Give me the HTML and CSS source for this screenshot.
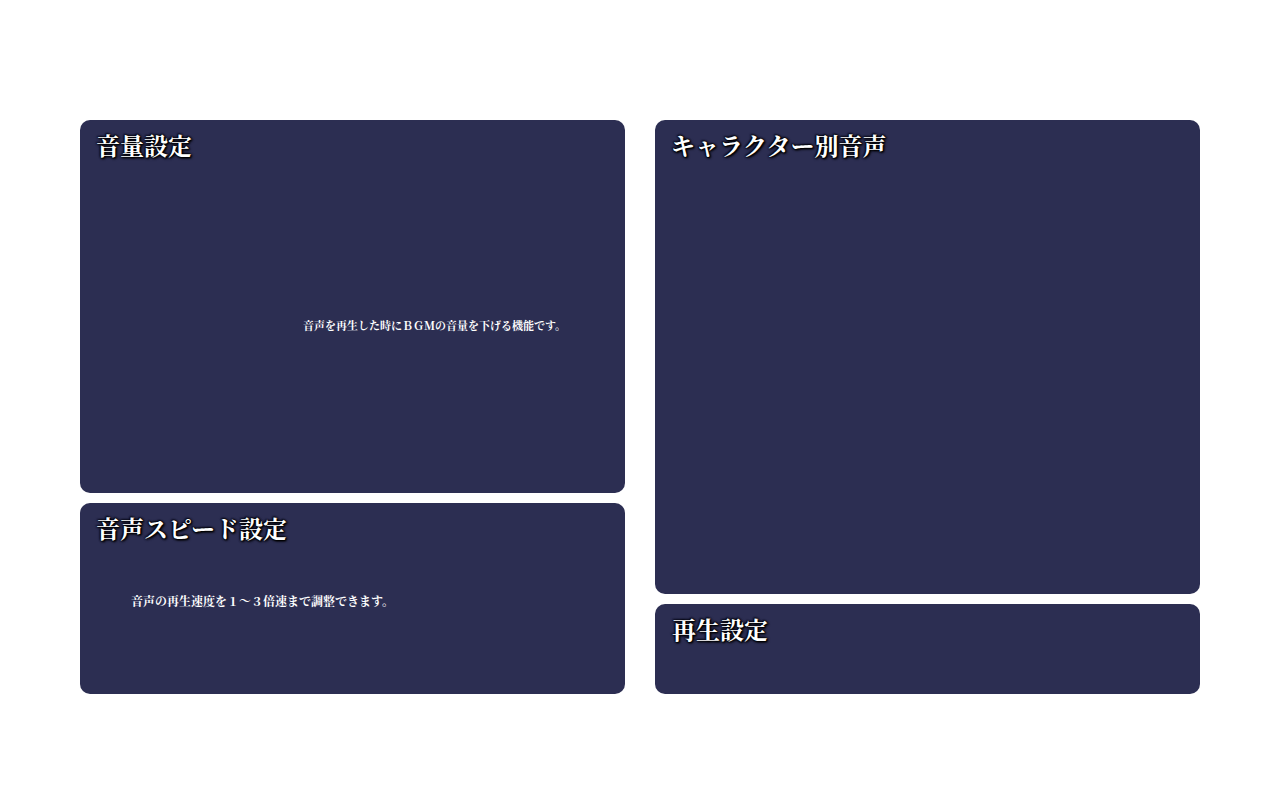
FILE: index.html
```html
<!DOCTYPE html>
<html lang="ja">
<head>
<meta charset="utf-8">
<link rel="stylesheet" href="styles.css">
</head>
<body>
<div class="settings">
  <div class="col">
    <section class="panel volume">
      <h2 class="title">音量設定</h2>
      <div class="body body-volume">
        <p class="desc">音声を再生した時にＢＧＭの音量を下げる機能です。</p>
      </div>
    </section>
    <section class="panel speed">
      <h2 class="title">音声スピード設定</h2>
      <div class="body body-speed">
        <p class="desc desc-lg">音声の再生速度を１～３倍速まで調整できます。</p>
      </div>
    </section>
  </div>
  <div class="col">
    <section class="panel chara">
      <h2 class="title">キャラクター別音声</h2>
    </section>
    <section class="panel play">
      <h2 class="title title-play">再生設定</h2>
    </section>
  </div>
</div>
</body>
</html>
```
FILE: styles.css
```css
html, body {
  margin: 0;
  padding: 0;
  background: #ffffff;
}
body {
  font-family: "Noto Serif CJK JP", "Liberation Serif", serif;
}
.settings {
  display: grid;
  grid-template-columns: 545px 545px;
  gap: 30px;
  padding: 120px 80px 0 80px;
}
.col {
  display: flex;
  flex-direction: column;
  gap: 10px;
}
.panel {
  background: #2c2e52;
  border-radius: 10px;
  box-sizing: border-box;
  padding: 9px 16px 8px 16px;
  color: #fff;
}
.volume { height: 373px; }
.speed { height: 191px; }
.chara { height: 474px; }
.play { height: 90px; }
.title {
  margin: 0;
  font-size: 24px;
  font-weight: bold;
  line-height: 32px;
  color: #fff;
  text-shadow: 0 0 2px #000, 0 0 2px #000, 1px 1px 2px #000, -1px -1px 2px #0a0a20, 1px 1px 3px #000;
}
.title-play { padding-left: 1px; }
.body {
  display: flex;
}
.body-volume {
  height: 328px;
  align-items: center;
  padding-left: 207px;
}
.body-speed {
  padding: 49px 0 0 35px;
}
.desc {
  margin: 0;
  font-size: 11px;
  font-weight: bold;
  line-height: 16px;
}
.desc-lg {
  font-size: 12px;
}
```
